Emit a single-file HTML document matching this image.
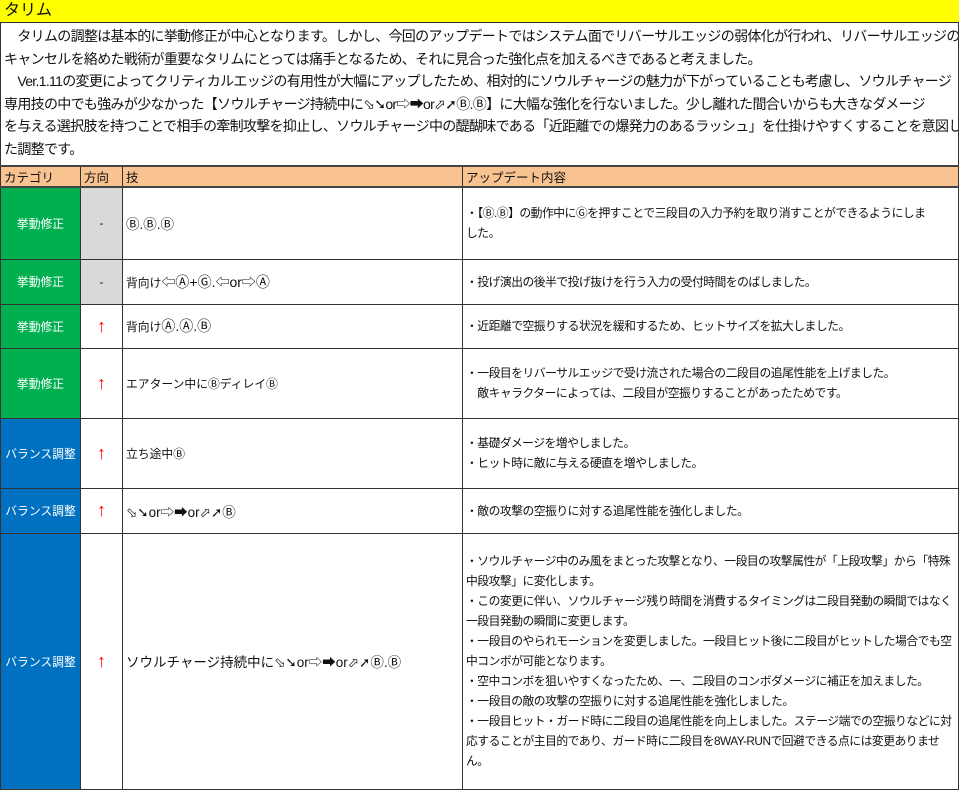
<!DOCTYPE html>
<html><head><meta charset="utf-8"><style>
*{margin:0;padding:0;box-sizing:border-box}
body{width:960px;height:788px;background:#fff;font-family:"Liberation Sans","Noto Sans CJK JP",sans-serif;color:#111;overflow:hidden;position:relative}
.title{position:absolute;left:0;top:0;width:959px;height:23px;background:#ffff00;border-bottom:1px solid #333;font-size:16px;line-height:22px;padding-left:4px}
.intro{position:absolute;left:0;top:23px;width:959px;height:142px;border-left:1px solid #333;border-right:1px solid #333;font-size:14px;line-height:22.5px;padding:2px 0 0 3px;letter-spacing:-0.68px;white-space:nowrap;overflow:hidden}
table{position:absolute;left:0;top:165px;width:959px;border-collapse:collapse;table-layout:fixed}
td{border:1px solid #333;font-size:11.8px;vertical-align:middle;padding:0 3px}
tr.h td{background:#f8c291;height:21px;font-size:12.5px;border-top:2px solid #444;border-bottom:2px solid #444}
td.g{background:#00b050;color:#fff;text-align:center}
td.b{background:#0070c0;color:#fff;text-align:center}
td.gr{background:#d9d9d9;text-align:center}
td.up{color:#f00;text-align:center;font-size:18px}
td.w{font-size:13.5px}
td.t{line-height:20px;padding:0 0 0 3px;letter-spacing:-0.5px;white-space:nowrap;overflow:hidden}
.c{font-size:14px}
</style></head><body>
<div class="title">タリム</div>
<div class="intro">　タリムの調整は基本的に挙動修正が中心となります。しかし、今回のアップデートではシステム面でリバーサルエッジの弱体化が行われ、リバーサルエッジの<br>キャンセルを絡めた戦術が重要なタリムにとっては痛手となるため、それに見合った強化点を加えるべきであると考えました。<br>　Ver.1.11の変更によってクリティカルエッジの有用性が大幅にアップしたため、相対的にソウルチャージの魅力が下がっていることも考慮し、ソウルチャージ<br>専用技の中でも強みが少なかった【ソウルチャージ持続中に⬂➘or⇨➡or⬀➚Ⓑ.Ⓑ】に大幅な強化を行ないました。少し離れた間合いからも大きなダメージ<br>を与える選択肢を持つことで相手の牽制攻撃を抑止し、ソウルチャージ中の醍醐味である「近距離での爆発力のあるラッシュ」を仕掛けやすくすることを意図し<br>た調整です。</div>
<table>
<colgroup><col style="width:80px"><col style="width:42px"><col style="width:340px"><col></colgroup>
<tr class="h"><td>カテゴリ</td><td>方向</td><td>技</td><td>アップデート内容</td></tr>
<tr style="height:72px"><td class="g">挙動修正</td><td class="gr">-</td><td class="w">Ⓑ.Ⓑ.Ⓑ</td><td class="t">・【Ⓑ.Ⓑ】の動作中にⒼを押すことで三段目の入力予約を取り消すことができるようにしま<br>した。</td></tr>
<tr style="height:45px"><td class="g">挙動修正</td><td class="gr">-</td><td>背向け<span class="c">⇦Ⓐ+Ⓖ.⇦or⇨Ⓐ</span></td><td class="t">・投げ演出の後半で投げ抜けを行う入力の受付時間をのばしました。</td></tr>
<tr style="height:44px"><td class="g">挙動修正</td><td class="up">↑</td><td>背向け<span class="c">Ⓐ.Ⓐ.Ⓑ</span></td><td class="t">・近距離で空振りする状況を緩和するため、ヒットサイズを拡大しました。</td></tr>
<tr style="height:70px"><td class="g">挙動修正</td><td class="up">↑</td><td>エアターン中にⒷディレイⒷ</td><td class="t">・一段目をリバーサルエッジで受け流された場合の二段目の追尾性能を上げました。<br>　敵キャラクターによっては、二段目が空振りすることがあったためです。</td></tr>
<tr style="height:70px"><td class="b">バランス調整</td><td class="up">↑</td><td>立ち途中Ⓑ</td><td class="t">・基礎ダメージを増やしました。<br>・ヒット時に敵に与える硬直を増やしました。</td></tr>
<tr style="height:45px"><td class="b">バランス調整</td><td class="up">↑</td><td class="w">⬂➘or⇨➡or⬀➚Ⓑ</td><td class="t">・敵の攻撃の空振りに対する追尾性能を強化しました。</td></tr>
<tr style="height:256px"><td class="b">バランス調整</td><td class="up">↑</td><td class="w">ソウルチャージ持続中に⬂➘or⇨➡or⬀➚Ⓑ.Ⓑ</td><td class="t">・ソウルチャージ中のみ風をまとった攻撃となり、一段目の攻撃属性が「上段攻撃」から「特殊<br>中段攻撃」に変化します。<br>・この変更に伴い、ソウルチャージ残り時間を消費するタイミングは二段目発動の瞬間ではなく<br>一段目発動の瞬間に変更します。<br>・一段目のやられモーションを変更しました。一段目ヒット後に二段目がヒットした場合でも空<br>中コンボが可能となります。<br>・空中コンボを狙いやすくなったため、一、二段目のコンボダメージに補正を加えました。<br>・一段目の敵の攻撃の空振りに対する追尾性能を強化しました。<br>・一段目ヒット・ガード時に二段目の追尾性能を向上しました。ステージ端での空振りなどに対<br>応することが主目的であり、ガード時に二段目を8WAY-RUNで回避できる点には変更ありませ<br>ん。</td></tr>
</table>
</body></html>
